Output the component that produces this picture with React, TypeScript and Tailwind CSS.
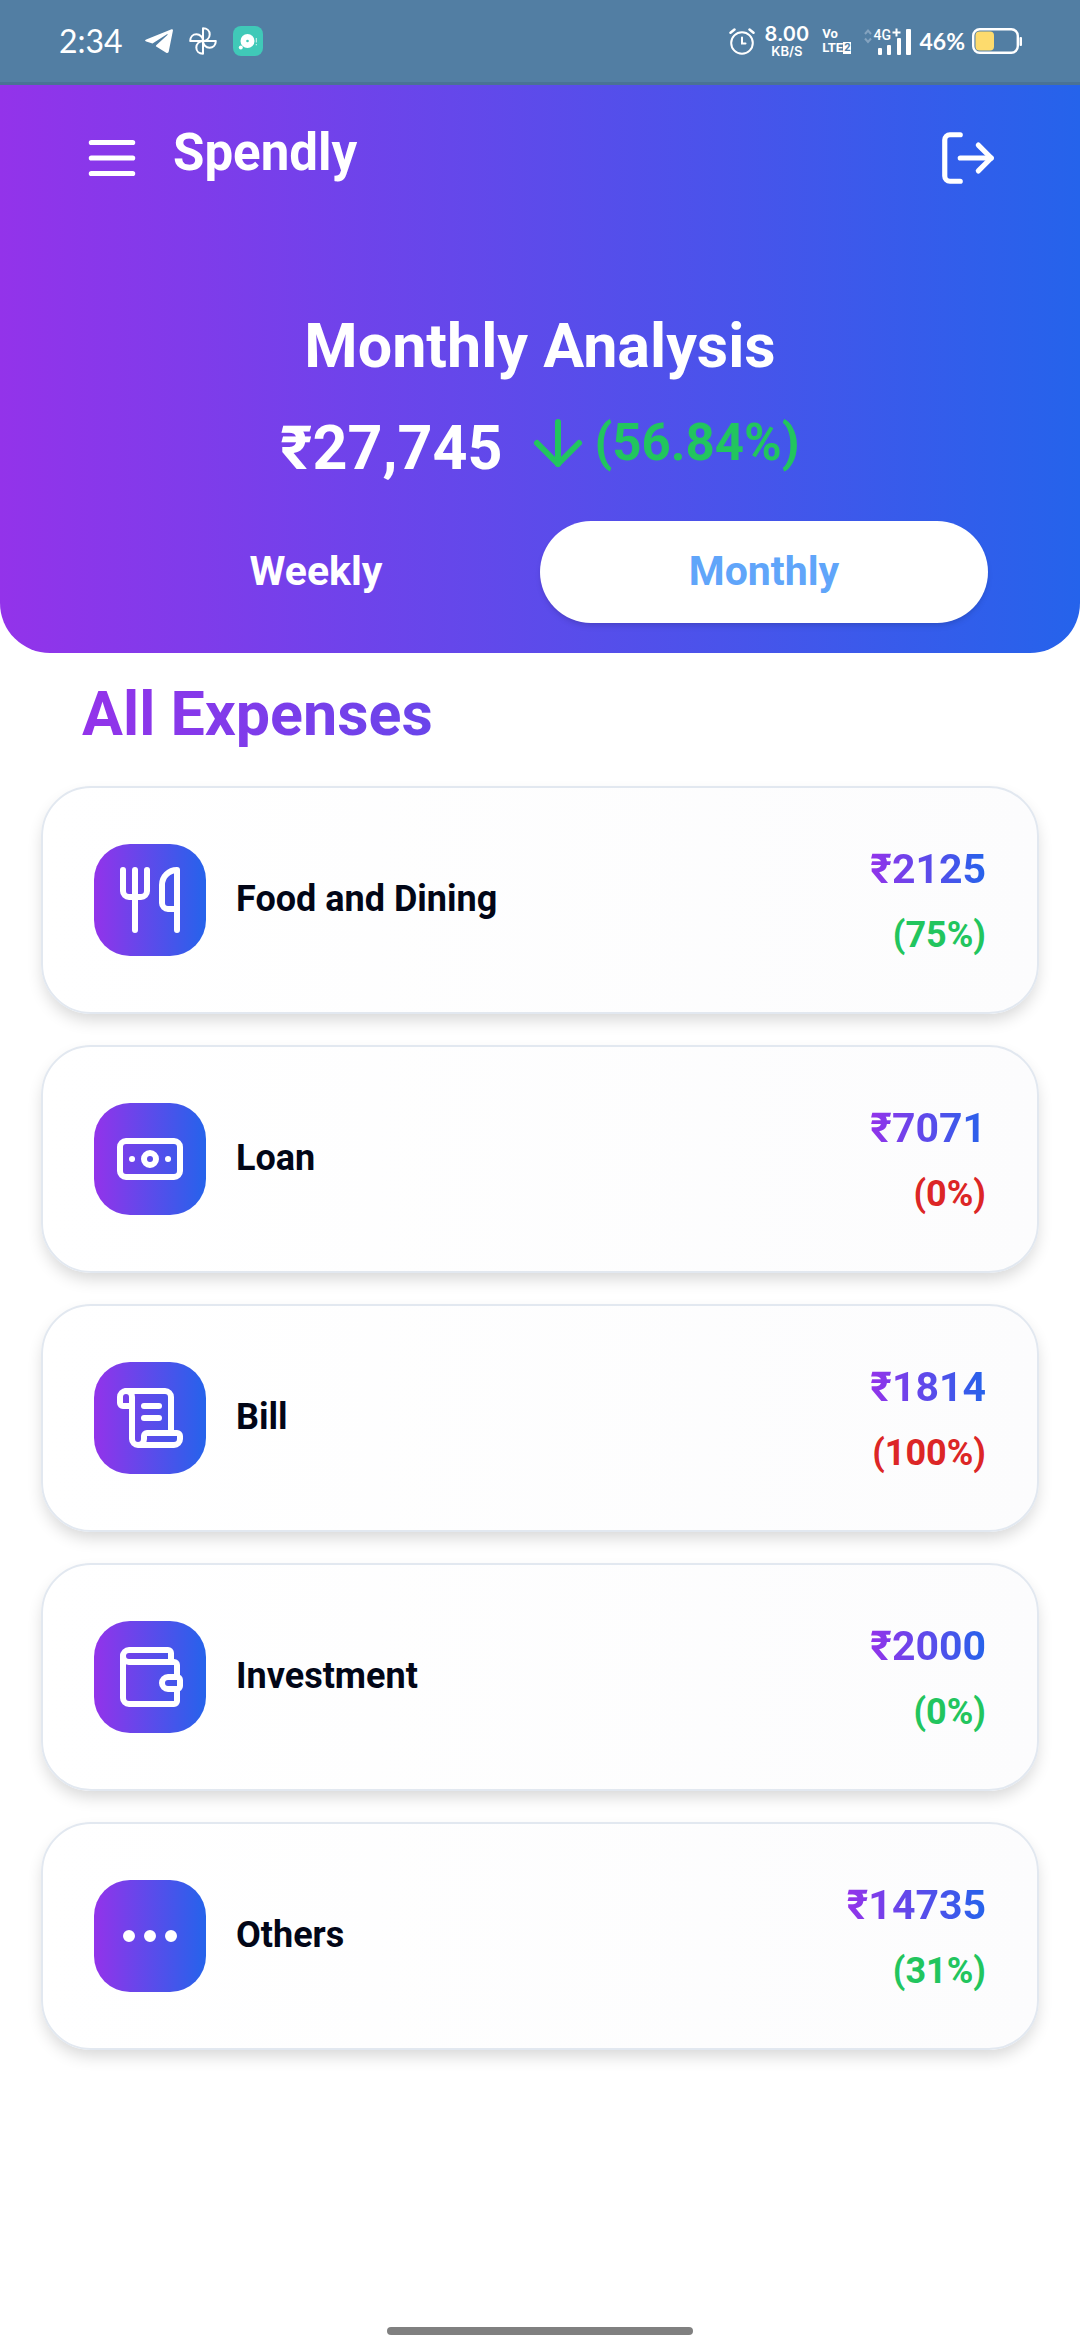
import { useState } from "react";
import type { ComponentType } from "react";
import { ArrowDown, Banknote, Ellipsis, LogOut, ScrollText, Utensils, Wallet } from "lucide-react";

type Expense = {
  name: string;
  amount: string;
  change: string;
  down: boolean;
  Icon: ComponentType<{ className?: string }>;
};

const expenses: Expense[] = [
  { name: "Food and Dining", amount: "₹2125", change: "(75%)", down: true, Icon: Utensils },
  { name: "Loan", amount: "₹7071", change: "(0%)", down: false, Icon: Banknote },
  { name: "Bill", amount: "₹1814", change: "(100%)", down: false, Icon: ScrollText },
  { name: "Investment", amount: "₹2000", change: "(0%)", down: true, Icon: Wallet },
  { name: "Others", amount: "₹14735", change: "(31%)", down: true, Icon: Ellipsis },
];

function TelegramIcon() {
  return (
    <svg className="h-6 w-7" viewBox="0 0 28 24" fill="#fff">
      <path d="M26.6.3 1.2 10.4c-1.5.7-1.5 1.7 0 2.2l6.3 2L21.6 5.600c.8-.5 1.400-.1.8.5L11.200 16.300l-.4.9 10.400 6.500c1.400.6 2.300.2 2.600-1.400L27.900 1.700c.2-1.200-.4-1.700-1.300-1.400Z" />
    </svg>
  );
}

function PinwheelIcon() {
  return (
    <svg className="size-7" viewBox="0 0 28 28" fill="none" stroke="#fff" strokeWidth="2" strokeLinejoin="round">
      <path d="M14 14V1.200c4 0 6.700 2.600 6.700 6.200 0 3.800-3 6.600-6.700 6.600Z" />
      <path d="M14 14h12.800c0 4-2.600 6.700-6.200 6.700-3.800 0-6.600-3-6.600-6.700Z" />
      <path d="M14 14v12.800c-4 0-6.700-2.600-6.700-6.200 0-3.800 3-6.600 6.700-6.600Z" />
      <path d="M14 14H1.200c0-4 2.600-6.700 6.200-6.700 3.800 0 6.600 3 6.600 6.700Z" />
    </svg>
  );
}

function DiscAppIcon() {
  return (
    <svg className="size-[30px]" viewBox="0 0 30 30">
      <rect width="30" height="30" rx="8" fill="#40c9b8" />
      <circle cx="14.500" cy="15" r="7" fill="#fff" />
      <circle cx="14.500" cy="15" r="1.300" fill="#40c9b8" />
      <circle cx="7.800" cy="21.500" r="2" fill="#fff" />
      <path d="M23.300 12v4.500M23.300 18v1.300" stroke="#d9f5f1" strokeWidth="1" />
    </svg>
  );
}

function AlarmIcon() {
  return (
    <svg className="h-[27px] w-[26px]" viewBox="0 0 26 27" fill="none" stroke="#fff" strokeWidth="2" strokeLinecap="round">
      <circle cx="13" cy="15" r="10.800" />
      <path d="M13 9.500V15.500h3.500" />
      <path d="M1.500 4.800 5.500 1.500M24.500 4.800 20.500 1.500" strokeWidth="2.500" />
    </svg>
  );
}

function SignalIcon() {
  return (
    <div className="relative h-[27px] w-[50px] text-[14px] leading-[14px]">
      <svg className="h-full w-full" viewBox="0 0 50 27" fill="#fff">
        <path d="M2 6l3-3.500L8 6M2 10.500 5 14l3-3.500" fill="none" stroke="#84a3bf" strokeWidth="2" />
        <rect x="15" y="20" width="4" height="7" rx="1" />
        <rect x="24" y="17" width="4" height="10" rx="1" />
        <rect x="34" y="10" width="4" height="17" rx="1" />
        <rect x="43" y="1" width="5" height="26" rx="1" />
        <path d="M29.500 4.500h8M33.500 0.500v8" stroke="#fff" strokeWidth="2" />
      </svg>
      <span className="absolute top-0 left-[10px] font-medium">4G</span>
    </div>
  );
}

function BatteryIcon() {
  return (
    <svg className="h-[26px] w-[50px]" viewBox="0 0 50 26">
      <rect x="1.200" y="1.200" width="44.600" height="23.600" rx="6.500" fill="none" stroke="#fff" strokeWidth="2.400" />
      <rect x="3.500" y="3.500" width="18.500" height="19" rx="4" fill="#fddb6d" />
      <rect x="47.500" y="9" width="2.500" height="9" rx="1" fill="#fff" />
    </svg>
  );
}

function StatusBar() {
  return (
    <div className="flex h-[85px] items-center justify-between border-b-3 border-[#4a7295] bg-[#527ea3] pr-[58px] pl-[59px] text-white">
      <div className="flex items-center">
        <span className="w-[64px] font-[Lato] text-[32px] leading-[40px]">2:34</span>
        <div className="ml-[22px] flex items-center gap-4">
          <TelegramIcon />
          <PinwheelIcon />
          <DiscAppIcon />
        </div>
      </div>
      <div className="flex items-center">
        <AlarmIcon />
        <div className="ml-[10px] text-center font-[Inter] font-semibold">
          <div className="text-[20px] leading-[20px]">8.00</div>
          <div className="text-[13px] leading-[14px]">KB/S</div>
        </div>
        <div className="mr-[12px] ml-[13px] flex flex-col text-[13px] leading-[14px] font-bold">
          <span>Vo</span>
          <span className="flex items-center">
            LTE
            <span className="bg-white px-px text-[11px] leading-[12px] text-[#527ea3]">2</span>
          </span>
        </div>
        <SignalIcon />
        <span className="ml-[6px] font-[Lato] text-[23px] leading-[28px] font-bold">46%</span>
        <div className="ml-[7px]">
          <BatteryIcon />
        </div>
      </div>
    </div>
  );
}

function MenuIcon() {
  return (
    <svg className="size-[62px]" viewBox="0 0 24 24" fill="none" stroke="currentColor" strokeWidth="2" strokeLinecap="round">
      <path d="M4 6h16M4 12h16M4 18h16" />
    </svg>
  );
}

function Header() {
  const [period, setPeriod] = useState("Monthly");
  return (
    <header className="rounded-b-[50px] bg-linear-to-r/srgb from-[#9333ea] to-[#2563eb] px-[81px] pt-[42px] pb-[30px] text-white">
      <div className="flex items-start">
        <button aria-label="Open menu">
          <MenuIcon />
        </button>
        <h1 className="ml-[30px] text-[51px] leading-[52px] font-bold">Spendly</h1>
        <button aria-label="Log out" className="ml-auto">
          <LogOut className="size-[62px]" />
        </button>
      </div>
      <h2 className="mt-[115px] text-center text-[61px] leading-[84px] font-bold">Monthly Analysis</h2>
      <div className="mt-[18px] flex items-start justify-center">
        <span className="text-[61px] leading-[84px] font-bold">₹27,745</span>
        <span className="ml-5 flex items-center text-[51px] leading-[74px] font-bold text-[#22c55e]">
          <ArrowDown className="size-[72px]" />
          (56.84%)
        </span>
      </div>
      <div className="mx-[11px] mt-[31px] grid grid-cols-2">
        {["Weekly", "Monthly"].map((label) => (
          <button
            key={label}
            onClick={() => setPeriod(label)}
            aria-pressed={period === label}
            className={
              period === label
                ? "h-[102px] rounded-full bg-white text-[41px] font-bold text-[#60a5fa] shadow-md"
                : "h-[102px] rounded-full text-[41px] font-bold text-white"
            }
          >
            {label}
          </button>
        ))}
      </div>
    </header>
  );
}

function ExpenseCard({ name, amount, change, down, Icon }: Expense) {
  return (
    <li className="flex h-[228px] items-center rounded-[50px] border-2 border-[#e2e8f0] bg-linear-to-r/srgb from-white to-[#fcfcfd] px-[51px] shadow-[0_8px_16px_-2px_rgba(0,0,0,0.16)]">
      <div className="flex size-[112px] items-center justify-center rounded-[36px] bg-linear-to-r/srgb from-[#9333ea] to-[#2563eb] text-white">
        <Icon className="size-[72px]" />
      </div>
      <h3 className="ml-[30px] pb-[2px] text-[36px] leading-[48px] font-bold text-[#020617]">{name}</h3>
      <div className="ml-auto flex flex-col items-end gap-[6px] pt-[4px] leading-[60px] font-bold">
        <span className="bg-linear-to-r/srgb from-[#9333ea] to-[#2563eb] bg-clip-text text-[41px] text-transparent">{amount}</span>
        <span className={down ? "text-[36px] text-[#22c55e]" : "text-[36px] text-[#dc2626]"}>{change}</span>
      </div>
    </li>
  );
}

export default function App() {
  return (
    <div className="flex min-h-screen flex-col bg-white font-[Roboto,sans-serif]">
      <StatusBar />
      <Header />
      <main className="px-[41px]">
        <h2 className="mx-[41px] mt-[19px] bg-linear-to-r/srgb from-[#9333ea] to-[#2563eb] bg-clip-text text-[61px] leading-[84px] font-bold text-transparent">
          All Expenses
        </h2>
        <ul className="mt-[30px] flex flex-col gap-[31px]">
          {expenses.map((e) => (
            <ExpenseCard key={e.name} {...e} />
          ))}
        </ul>
      </main>
      <div className="mx-auto mt-auto mb-[5px] h-2 w-[306px] rounded-full bg-[#808080]" />
    </div>
  );
}
